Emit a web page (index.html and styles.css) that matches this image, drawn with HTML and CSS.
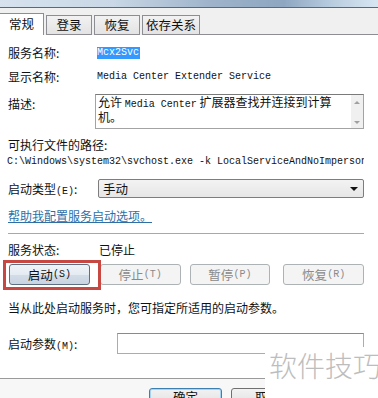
FILE: index.html
```html
<!DOCTYPE html>
<html lang="zh-CN">
<head>
<meta charset="utf-8">
<link rel="stylesheet" href="styles.css">
</head>
<body>
<div class="titlebar"></div>
<div class="tabbar">
  <div class="tab active">常规</div>
  <div class="tab">登录</div>
  <div class="tab">恢复</div>
  <div class="tab">依存关系</div>
  <div class="tabfill"></div>
</div>
<div class="panel">
  <div class="row r-name"><span class="label">服务名称:</span><span class="sel">Mcx2Svc</span></div>
  <div class="row r-disp"><span class="label">显示名称:</span><span class="mono">Media Center Extender Service</span></div>
  <div class="r-desc">
    <span class="label desc-label">描述:</span>
    <div class="textarea">
      <div class="ta-text">允许 <span class="mono-in">Media Center</span> 扩展器查找并连接到计算机。</div>
      <div class="scroll"><span class="arr up"></span><span class="arr down"></span></div>
    </div>
  </div>
  <div class="row r-exe">可执行文件的路径:</div>
  <div class="row r-path"><span class="mono path">C:\Windows\system32\svchost.exe -k LocalServiceAndNoImpersonation</span></div>
  <div class="r-type">
    <span class="label">启动类型<span class="mnem">(E)</span>:</span>
    <div class="select"><span>手动</span><span class="caret"></span></div>
  </div>
  <div class="row r-link"><span class="link">帮助我配置服务启动选项。</span></div>
  <div class="sep"></div>
  <div class="row r-status"><span class="label">服务状态:</span><span>已停止</span></div>
  <div class="btnrow">
    <div class="btn start">启动<span class="mnem">(S)</span></div>
    <div class="btn dis b-stop">停止<span class="mnem">(T)</span></div>
    <div class="btn dis b-pause">暂停<span class="mnem">(P)</span></div>
    <div class="btn dis b-resume">恢复<span class="mnem">(R)</span></div>
    <div class="redbox"></div>
  </div>
  <div class="row r-hint">当从此处启动服务时，您可指定所适用的启动参数。</div>
  <div class="r-param">
    <span class="label plabel">启动参数<span class="mnem">(M)</span>:</span>
    <div class="input"></div>
  </div>
</div>
<div class="footer">
  <div class="fbtn ok">确定</div>
  <div class="fbtn cancel">取消</div>
</div>
<div class="watermark">软件技巧</div>
</body>
</html>
```

FILE: styles.css
```css
html, body {
  margin: 0;
  padding: 0;
}
body {
  width: 378px;
  height: 398px;
  overflow: hidden;
  position: relative;
  font-family: "Noto Sans CJK SC", "Noto Sans", sans-serif;
  font-size: 12px;
  color: #111;
  background: #fff;
}
.titlebar {
  height: 7px;
  border-bottom: 1px solid #5b6878;
  background: linear-gradient(90deg, #d6e2ee 0%, #c9d7e6 30%, #9fb4cb 55%, #8ea6c1 75%, #b9cde0 88%, #d8e6f2 100%);
}
.tabbar {
  display: flex;
  align-items: flex-end;
  height: 27px;
  background: #f0f0f0;
}
.tab {
  box-sizing: border-box;
  height: 20px;
  border: 1px solid #8c8e94;
  margin-left: 2px;
  background: linear-gradient(#f2f2f2, #e3e3e3);
  display: flex;
  align-items: center;
  justify-content: center;
  line-height: 1;
  font-size: 12.5px;
}
.tab:nth-child(2) { width: 46px; }
.tab:nth-child(3) { width: 46px; }
.tab:nth-child(4) { width: 58px; }
.tab.active {
  margin-left: 0;
  width: 44px;
  height: 22px;
  background: #fff;
  border-left: none;
  border-bottom: none;
  padding-bottom: 1px;
}
.tabfill {
  flex: 1;
  border-bottom: 1px solid #8c8e94;
}
.panel {
  padding: 0 14px 0 8px;
  background: #fff;
}
.row {
  display: flex;
  align-items: center;
  height: 16px;
  line-height: 16px;
  white-space: nowrap;
}
.label {
  width: 89px;
  flex: none;
}
.mnem {
  font-family: "Liberation Mono", monospace;
  font-size: 10px;
}
.mono {
  font-family: "Liberation Mono", monospace;
  font-size: 10px;
}
.mono-in {
  font-family: "Liberation Mono", monospace;
  font-size: 10px;
  line-height: 10px;
}
.r-name { margin-top: 10px; }
.sel {
  background: #3399ff;
  color: #fff;
  font-family: "Liberation Mono", monospace;
  font-size: 10px;
  line-height: 12px;
  padding: 0 1px 0 0;
}
.r-disp { margin-top: 8px; }
.r-desc {
  display: flex;
  margin-top: 9px;
}
.desc-label {
  width: 87px;
  padding-top: 2px;
  line-height: 16px;
}
.textarea {
  box-sizing: border-box;
  width: 269px;
  height: 35px;
  border: 1px solid #a3a3a3;
  border-top-color: #7a7a7a;
  display: flex;
  background: #fff;
}
.ta-text {
  flex: 1;
  padding: 0 0 0 2px;
  line-height: 13px;
  font-size: 12px;
  word-break: break-all;
}
.scroll {
  width: 12px;
  background: #f0f0f0;
  display: flex;
  flex-direction: column;
  justify-content: space-between;
  align-items: center;
  padding: 6px 0 4px;
  box-sizing: border-box;
}
.arr {
  width: 0;
  height: 0;
  border-left: 3px solid transparent;
  border-right: 3px solid transparent;
}
.arr.up { border-bottom: 3px solid #a0a0a0; }
.arr.down { border-top: 3px solid #a0a0a0; }
.r-exe { margin-top: 8px; }
.r-path {
  margin-top: 1px;
  margin-left: -1px;
  width: 357px;
  overflow: hidden;
}
.path { font-size: 10px; }
.r-type {
  display: flex;
  align-items: center;
  margin-top: 9px;
}
.r-type .label { width: 90px; }
.select {
  box-sizing: border-box;
  width: 267px;
  height: 19px;
  border: 1px solid #7d7d7d;
  border-radius: 2px;
  background: linear-gradient(#f3f3f3, #e6e6e6);
  display: flex;
  align-items: center;
  justify-content: space-between;
  padding: 0 5px 0 4px;
  font-size: 12.5px;
}
.caret {
  width: 0;
  height: 0;
  border-left: 4px solid transparent;
  border-right: 4px solid transparent;
  border-top: 4px solid #111;
}
.r-link { margin-top: 10px; }
.link {
  color: #2f6fa6;
  text-decoration: underline;
}
.sep {
  height: 1px;
  background: #a8a8a8;
  margin: 9px 0 0 0;
}
.r-status { margin-top: 8px; }
.r-status .label { width: 91px; }
.btnrow {
  position: relative;
  display: flex;
  margin-top: 6px;
  margin-left: 1px;
}
.btn {
  box-sizing: border-box;
  width: 81px;
  height: 21px;
  border: 1px solid #707070;
  border-radius: 3px;
  display: flex;
  align-items: center;
  justify-content: center;
  font-size: 12.5px;
}
.btn.start {
  background: linear-gradient(#f0f4f8 0%, #e4ebf2 50%, #d3dde8 51%, #c8d4e1 100%);
  border-color: #5e6f82;
}
.btn.dis {
  background: #f4f4f4;
  border-color: #adb2b5;
  color: #8a8a8a;
}
.b-stop { margin-left: 10px; }
.b-pause { margin-left: 9px; }
.b-resume { margin-left: 13px; }
.redbox {
  position: absolute;
  left: -6px;
  top: -4px;
  width: 98px;
  height: 30px;
  box-sizing: border-box;
  border: 3px solid #c74843;
}
.r-hint { margin-top: 15px; }
.r-param {
  display: flex;
  align-items: center;
  margin-top: 17px;
}
.plabel { width: 109px; }
.input {
  box-sizing: border-box;
  width: 248px;
  height: 21px;
  border: 1px solid #acacac;
  border-top-color: #8a8a8a;
}
.footer {
  position: relative;
  margin-top: 24px;
  border-top: 1px solid #9a9a9a;
  height: 30px;
  background: #f7f7f7;
  display: flex;
  padding: 9px 0 0 149px;
  box-sizing: border-box;
}
.fbtn {
  box-sizing: border-box;
  width: 73px;
  height: 23px;
  border: 1px solid #707070;
  border-radius: 3px;
  background: linear-gradient(#f2f2f2, #dcdcdc);
  display: flex;
  justify-content: center;
  align-items: flex-start;
  line-height: 16px;
  font-size: 12.5px;
}
.fbtn.ok {
  border-color: #3c7fb1;
  box-shadow: inset 0 0 0 1px #a7d3f0;
}
.fbtn.cancel { margin-left: 9px; }
.watermark {
  position: absolute;
  left: 265px;
  top: 347px;
  width: 113px;
  height: 51px;
  background: #fff;
  color: #bdbdbd;
  font-size: 28px;
  font-weight: 300;
  line-height: 36px;
  padding-left: 4px;
  box-sizing: border-box;
  white-space: nowrap;
}
```
